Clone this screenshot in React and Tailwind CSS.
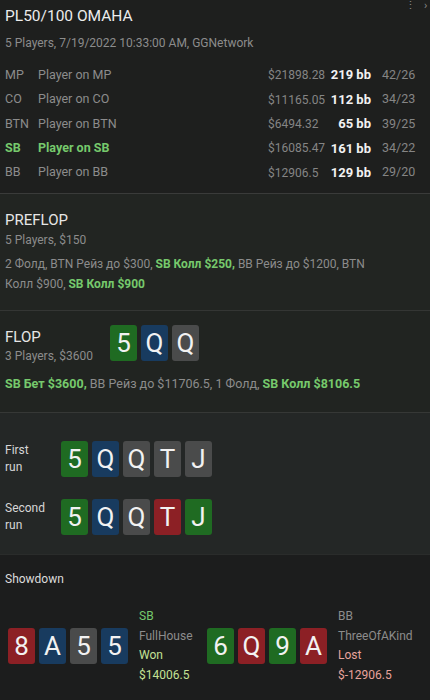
import React from "react";

const cardBg = {
  g: "bg-[#1f6b22]",
  b: "bg-[#183b5f]",
  s: "bg-[#4a4b4b]",
  r: "bg-[#8c2025]",
};

function Card({ v, c }) {
  return (
    <div
      className={`w-[27px] h-[36px] rounded-[3px] flex items-center justify-center text-[26px] leading-none text-[#f2f2f2] ${cardBg[c]}`}
    >
      {v}
    </div>
  );
}

function Cards({ list }) {
  return (
    <div className="flex gap-[4px]">
      {list.map(([v, c], i) => (
        <Card key={i} v={v} c={c} />
      ))}
    </div>
  );
}

const players = [
  ["MP", "Player on MP", "$21898.28", "219 bb", "42/26", false],
  ["CO", "Player on CO", "$11165.05", "112 bb", "34/23", false],
  ["BTN", "Player on BTN", "$6494.32", "65 bb", "39/25", false],
  ["SB", "Player on SB", "$16085.47", "161 bb", "34/22", true],
  ["BB", "Player on BB", "$12906.5", "129 bb", "29/20", false],
];

const G = "text-[#76c96c] font-bold";

export default function App() {
  return (
    <div
      className="w-[430px] h-[700px] overflow-hidden bg-[#1d1e1d] text-[#9a9a9a] relative"
      style={{ fontFamily: 'Roboto, "Noto Sans", sans-serif' }}
    >
      <div className="absolute top-[0px] left-[405px] text-[#8a8a8a] text-[11px] leading-[12px]">⋮</div>
      <div className="absolute top-[0px] left-[424px] text-[#8a8a8a] text-[11px] leading-[12px]">›</div>

      {/* header */}
      <div className="pt-[4px] pb-[8px] px-[5px] bg-[#1e1f1e] border-b border-[#3a3b3a]">
        <div className="text-[15.5px] leading-[24px] text-[#ececec]">PL50/100 OMAHA</div>
        <div className="mt-[5px] text-[12px] leading-[20px] text-[#8c8c8c]">
          5 Players, 7/19/2022 10:33:00 AM, GGNetwork
        </div>
        <div className="mt-[10px] text-[12.5px]">
          {players.map(([pos, name, stack, bb, st, hi]) => (
            <div key={pos} className="flex h-[24.4px] items-center">
              <div className={`w-[33px] ${hi ? G : "text-[#8c8c8c]"}`}>{pos}</div>
              <div className={`w-[230px] ${hi ? G : "text-[#8c8c8c]"}`}>{name}</div>
              <div className="w-[60px] text-[#858585] text-[12px]">{stack}</div>
              <div className="w-[43px] text-right font-bold text-[#f2f2f2] text-[13px]">{bb}</div>
              <div className="ml-[11px] text-[#858585]">{st}</div>
            </div>
          ))}
        </div>
      </div>

      {/* preflop */}
      <div className="pt-[15px] pb-[16px] px-[5px] bg-[#222522] border-b border-[#343634]">
        <div className="text-[15px] leading-[22px] text-[#e6e6e6]">PREFLOP</div>
        <div className="text-[12px] leading-[18px] text-[#8c8c8c]">5 Players, $150</div>
        <div className="mt-[5px] text-[12px] leading-[20px] text-[#8c8c8c] w-[372px]">
          2 Фолд, BTN Рейз до $300, <span className={G}>SB Колл $250,</span> BB Рейз до $1200, BTN Колл $900,{" "}
          <span className={G}>SB Колл $900</span>
        </div>
      </div>

      {/* flop */}
      <div className="pt-[14px] pb-[18px] px-[5px] bg-[#212421] border-b border-[#363836]">
        <div className="flex items-start">
          <div className="w-[105px] pt-[1px]">
            <div className="text-[15px] leading-[22px] text-[#e6e6e6]">FLOP</div>
            <div className="text-[12px] leading-[16px] text-[#8c8c8c]">3 Players, $3600</div>
          </div>
          <Cards list={[["5", "g"], ["Q", "b"], ["Q", "s"]]} />
        </div>
        <div className="mt-[10px] text-[12.5px] leading-[20px] text-[#8c8c8c]">
          <span className={G}>SB Бет $3600,</span> BB Рейз до $11706.5, 1 Фолд,{" "}
          <span className={G}>SB Колл $8106.5</span>
        </div>
      </div>

      {/* runs */}
      <div className="pt-[28px] pb-[19px] px-[5px] bg-[#242726] border-b border-[#2a2c2b]">
        <div className="flex items-center">
          <div className="w-[56px] text-[12px] leading-[17px] text-[#d6d6d6]">
            First
            <br />
            run
          </div>
          <Cards list={[["5", "g"], ["Q", "b"], ["Q", "s"], ["T", "s"], ["J", "s"]]} />
        </div>
        <div className="flex items-center mt-[22px]">
          <div className="w-[56px] text-[12px] leading-[17px] text-[#d6d6d6]">
            Second
            <br />
            run
          </div>
          <Cards list={[["5", "g"], ["Q", "b"], ["Q", "s"], ["T", "r"], ["J", "g"]]} />
        </div>
      </div>

      {/* showdown */}
      <div className="pt-[15px] px-[5px] bg-[#1c1d1d] h-full">
        <div className="text-[12px] leading-[18px] text-[#dcdcdc]">Showdown</div>
        <div className="mt-[19px] flex items-center pl-[3px]">
          <Cards list={[["8", "r"], ["A", "b"], ["5", "s"], ["5", "b"]]} />
          <div className="ml-[11px] w-[68px] text-[12px] leading-[19.7px]">
            <div className="text-[#76c96c]">SB</div>
            <div className="text-[#8c8c8c]">FullHouse</div>
            <div className="text-[#c4e295]">Won</div>
            <div className="text-[#c4e295]">$14006.5</div>
          </div>
          <Cards list={[["6", "g"], ["Q", "r"], ["9", "g"], ["A", "r"]]} />
          <div className="ml-[11px] text-[12px] leading-[19.7px]">
            <div className="text-[#8c8c8c]">BB</div>
            <div className="text-[#8c8c8c]">ThreeOfAKind</div>
            <div className="text-[#e8a39c]">Lost</div>
            <div className="text-[#e8a39c]">$-12906.5</div>
          </div>
        </div>
      </div>
    </div>
  );
}
